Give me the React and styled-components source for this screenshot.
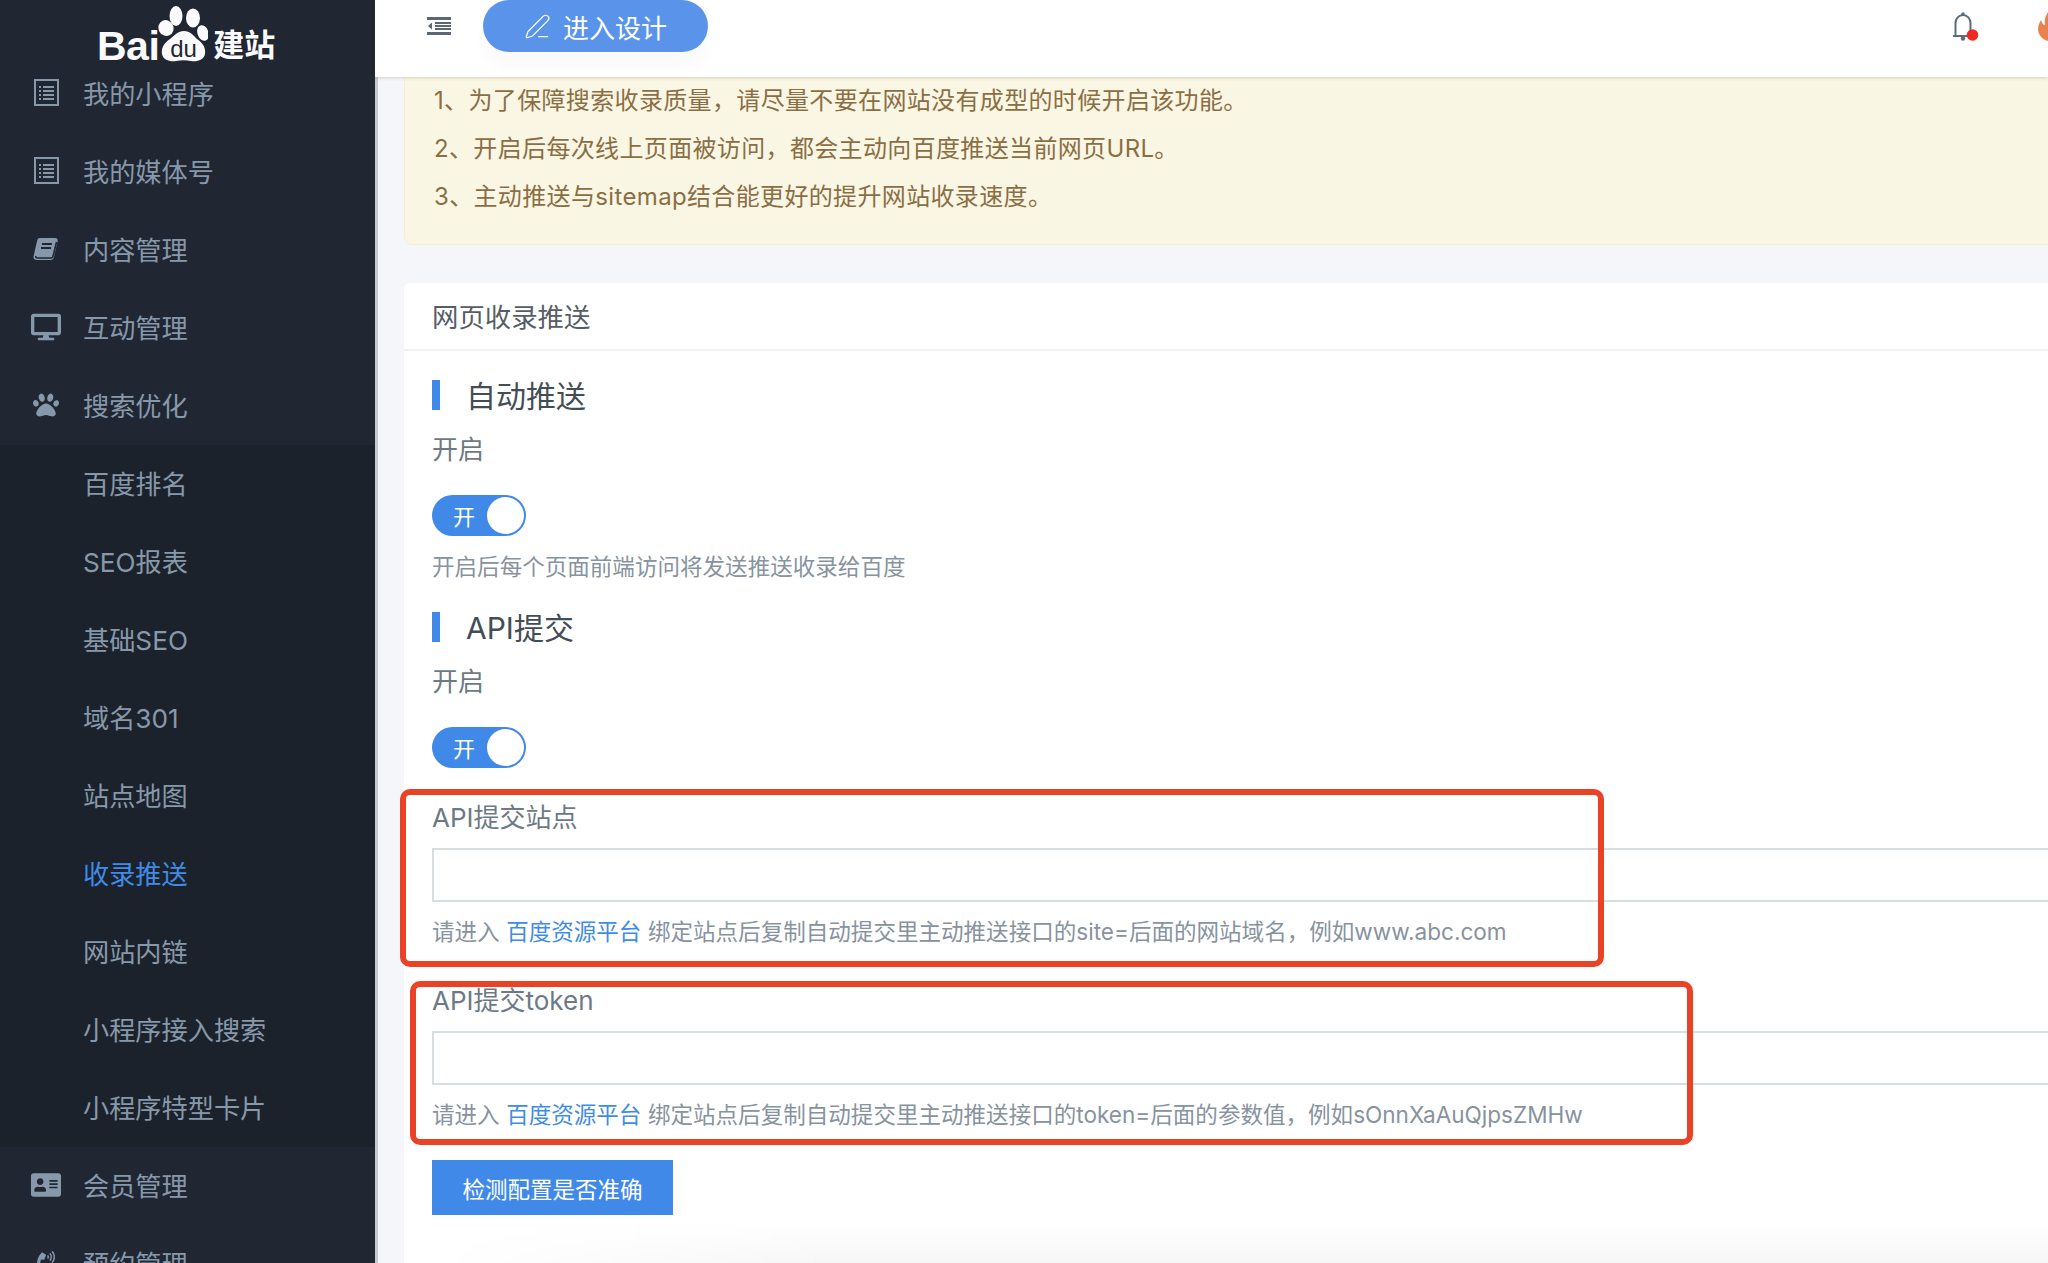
import React from "react";
import styled, { createGlobalStyle } from "styled-components";
import { FaDesktop, FaPaw, FaAddressCard, FaPhoneVolume } from "react-icons/fa";
import { PenLine } from "lucide-react";

const Global = createGlobalStyle`
  html, body { margin: 0; padding: 0; height: 100%; overflow: hidden; background: #f4f6fa; }
  body { font-family: Inter, "Noto Sans CJK SC", "Noto Sans", sans-serif; }
  * { box-sizing: border-box; }
`;

const Page = styled.div`
  display: flex;
  width: 2048px;
  height: 1263px;
  overflow: hidden;
`;

const Sidebar = styled.aside`
  flex: 0 0 375px;
  background: #202733;
  overflow: hidden;
`;

const Logo = styled.div`
  height: 55px;
  display: flex;
  align-items: flex-start;
  padding-left: 97px;
  color: #fbfafc;
  white-space: nowrap;
`;

const LogoWord = styled.span`
  font-family: "Liberation Sans", sans-serif;
  font-weight: 700;
  font-size: 41px;
  line-height: 46px;
  margin-top: 23px;
  letter-spacing: -0.5px;
`;

const LogoCn = styled.span`
  font-family: "Noto Sans CJK SC", sans-serif;
  font-weight: 700;
  font-size: 31px;
  line-height: 46px;
  margin-top: 20px;
  margin-left: 5px;
`;

const Paw = styled.svg`
  width: 50px;
  height: 60px;
  margin-top: 3px;
  margin-left: -1px;
  flex: none;
  position: relative;
`;

const MenuRow = styled.div`
  height: 78px;
  display: flex;
  align-items: center;
  padding-left: ${(p) => (p.$sub ? "83px" : "30px")};
  padding-bottom: 3px;
  gap: 21px;
  font-size: 26.2px;
  color: ${(p) => (p.$active ? "#3f8ce8" : "#8798aa")};
`;

const MenuIcon = styled.span`
  flex: 0 0 32px;
  display: flex;
  justify-content: center;
  align-items: center;
  color: #8798aa;
`;

const SubMenu = styled.div`
  background: #1c222b;
`;

const Main = styled.main`
  flex: 1;
  min-width: 0;
  position: relative;
  display: flex;
  flex-direction: column;
  overflow: hidden;
  &::after {
    content: "";
    position: absolute;
    left: 60px;
    right: 0;
    bottom: 0;
    height: 40px;
    background: linear-gradient(to bottom, rgba(0, 0, 0, 0), rgba(0, 0, 0, 0.035));
    -webkit-mask-image: linear-gradient(to right, transparent, #000 25%);
    mask-image: linear-gradient(to right, transparent, #000 25%);
    pointer-events: none;
  }
`;

const Header = styled.header`
  flex: 0 0 77px;
  height: 77px;
  background: #fff;
  position: relative;
  z-index: 2;
  display: flex;
  align-items: center;
  padding: 0 0 25px 52px;
  box-shadow: 0 1px 3px rgba(90, 80, 40, 0.22);
`;

const DesignButton = styled.div`
  height: 52px;
  width: 225px;
  margin-left: 32px;
  border-radius: 26px;
  background: #5a94ea;
  color: #fff;
  font-size: 26px;
  display: flex;
  align-items: center;
  justify-content: center;
  gap: 12px;
  box-shadow: 0 16px 14px rgba(0, 0, 0, 0.025);
`;

const HeaderRight = styled.div`
  margin-left: auto;
  margin-right: -20px;
  display: flex;
  align-items: center;
  gap: 59px;
`;

const Content = styled.div`
  flex: 1;
  border-left: 3px solid #c6cad1;
  padding-left: 26px;
  margin-right: -30px;
  margin-top: -1px;
`;

const Notice = styled.div`
  background: #faf6e4;
  border: 1px solid #f5eed3;
  border-radius: 0 0 0 8px;
  color: #8a6f45;
  font-size: 24px;
  letter-spacing: 0.35px;
  line-height: 48px;
  padding: 0 0 23px 29px;
`;

const Card = styled.section`
  margin-top: 38px;
  background: #fff;
  border-radius: 6px 0 0 0;
  padding-bottom: 60px;
`;

const CardTitle = styled.div`
  height: 68px;
  border-bottom: 2px solid #f1f2f5;
  padding: 0 28px 1px;
  display: flex;
  align-items: center;
  font-size: 26.4px;
  color: #555e66;
`;

const CardBody = styled.div`
  padding: 0 0 0 28px;
  margin-top: -1px;
`;

const SectionTitle = styled.h3`
  margin: 30px 0 0;
  height: 30px;
  border-left: 8px solid #4189e8;
  padding: 0 0 2px 26px;
  display: flex;
  align-items: center;
  font-size: 30px;
  font-weight: 400;
  color: #434d56;
`;

const Label = styled.div`
  margin-top: ${(p) => p.$top}px;
  height: 30px;
  line-height: 30px;
  font-size: 26px;
  color: #6d7a86;
`;

const Toggle = styled.div`
  margin-top: 30px;
  width: 94px;
  height: 41px;
  border-radius: 21px;
  background: #4189e8;
  position: relative;
  color: #fff;
  font-size: 22px;
  line-height: 44px;
  padding-left: 21px;
  &::after {
    content: "";
    position: absolute;
    right: 2px;
    top: 2px;
    width: 37px;
    height: 37px;
    border-radius: 50%;
    background: #fff;
  }
`;

const Help = styled.div`
  margin-top: ${(p) => p.$top}px;
  height: 30px;
  line-height: 30px;
  font-size: 22.55px;
  color: #87939f;
  white-space: nowrap;
`;

const HelpLink = styled.span`
  color: #3f8ce8;
  margin: 0 6.5px;
`;

const Field = styled.div`
  position: relative;
  margin-top: ${(p) => p.$top}px;
`;

const FieldLabel = styled(Label)`
  margin-top: 0;
`;

const Input = styled.div`
  margin-top: 15px;
  height: 54px;
  border: 2px solid #d6dee2;
  background: #fff;
`;

const RedBox = styled.div`
  position: absolute;
  left: ${(p) => p.$left}px;
  top: ${(p) => p.$topOffset}px;
  width: ${(p) => p.$w}px;
  height: ${(p) => p.$h}px;
  border: 6px solid #ea4227;
  border-radius: 10px;
  pointer-events: none;
`;

const Submit = styled.div`
  margin-top: 30px;
  width: 241px;
  height: 55px;
  background: #4189e8;
  color: #fff;
  font-size: 22.5px;
  display: flex;
  align-items: center;
  justify-content: center;
`;

const ListIcon = () => (
  <svg width="25" height="27" viewBox="0 0 25 27">
    <rect x="1" y="1" width="23" height="25" fill="none" stroke="#8798aa" strokeWidth="2" />
    <g fill="#8798aa">
      <rect x="5" y="7" width="2" height="2" /><rect x="9" y="7" width="11" height="2" />
      <rect x="5" y="11" width="2" height="2" /><rect x="9" y="11" width="11" height="2" />
      <rect x="5" y="15" width="2" height="2" /><rect x="9" y="15" width="11" height="2" />
      <rect x="5" y="19" width="2" height="2" /><rect x="9" y="19" width="11" height="2" />
    </g>
  </svg>
);

const BookIcon = () => (
  <svg width="26" height="24" viewBox="0 0 26 24">
    <path fill="#8798aa" d="M7 1h15c2 0 3 1 2.6 3L21 20c-.4 2-1.600 3-3.600 3H4c-2.500 0-4-1.500-3.400-4L4.200 3.500C4.600 1.800 5.500 1 7 1z" />
    <path fill="none" stroke="#202733" strokeWidth="1.600" d="M23.500 5 20 19.500c-.3 1-1 1.500-2 1.500H4.500c-1.500 0-2-1-1.500-2" />
    <path fill="none" stroke="#202733" strokeWidth="1.800" d="M9 7h10M8 11h10" />
  </svg>
);

const OutdentIcon = () => (
  <svg width="24" height="18" viewBox="0 0 24 18" fill="#5b6772">
    <rect width="24" height="3" />
    <rect y="15" width="24" height="3" />
    <rect x="8" y="5" width="16" height="2" />
    <rect x="8" y="8" width="16" height="2" />
    <rect x="8" y="11" width="16" height="2" />
    <path d="M5 5.500v7L1 9z" />
  </svg>
);

const BellIcon = () => (
  <svg width="27" height="30" viewBox="0 0 27 30">
    <path fill="none" stroke="#5f6d7a" strokeWidth="2" d="M1 25h20M3.500 25V12a7.500 8 0 0 1 15 0v13" />
    <circle cx="11" cy="3" r="1.800" fill="#5f6d7a" />
    <circle cx="11" cy="27.500" r="2.200" fill="#5f6d7a" />
    <circle cx="20.500" cy="24" r="5.800" fill="#ee2a1f" />
  </svg>
);

const FlameIcon = () => (
  <svg width="30" height="32" viewBox="0 0 30 32">
    <path fill="#e8824f" d="M12 0c2 5 10 8 14 15 3 7-2 16-12 17C6 31 0 26 0 19c0-4 2-7 3-9 1 3 2 5 4 5C6 9 8 4 12 0z" />
  </svg>
);

const items = [
  { text: "我的小程序", icon: <ListIcon /> },
  { text: "我的媒体号", icon: <ListIcon /> },
  { text: "内容管理", icon: <BookIcon /> },
  { text: "互动管理", icon: <FaDesktop size={30} /> },
  { text: "搜索优化", icon: <FaPaw size={26} /> },
];

const subs = ["百度排名", "SEO报表", "基础SEO", "域名301", "站点地图", "收录推送", "网站内链", "小程序接入搜索", "小程序特型卡片"];

export default function App() {
  return (
    <Page>
      <Global />
      <Sidebar>
        <Logo>
          <LogoWord>Bai</LogoWord>
          <Paw viewBox="0 0 50 60">
            <g fill="#fbfafc">
              <ellipse cx="18" cy="13" rx="6.500" ry="10" />
              <ellipse cx="35" cy="15" rx="7" ry="9.500" />
              <ellipse cx="8" cy="25" rx="7.500" ry="8" transform="rotate(-25 8 25)" />
              <ellipse cx="45" cy="30" rx="5.500" ry="8" transform="rotate(-20 45 30)" />
              <path d="M26 28c6 0 9 4 13 8 6 4 9 9 8 15-1 6-8 8-14 7-5-1-10-1-15 0-6 1-13-1-14-7-1-6 2-11 8-15 5-4 8-8 14-8z" />
            </g>
            <text x="25.500" y="54" textAnchor="middle" fontFamily="Liberation Sans, sans-serif" fontSize="24" fill="#202733">du</text>
          </Paw>
          <LogoCn>建站</LogoCn>
        </Logo>
        {items.map((it) => (
          <MenuRow key={it.text}>
            <MenuIcon>{it.icon}</MenuIcon>
            {it.text}
          </MenuRow>
        ))}
        <SubMenu>
          {subs.map((s) => (
            <MenuRow key={s} $sub $active={s === "收录推送"}>{s}</MenuRow>
          ))}
        </SubMenu>
        <MenuRow><MenuIcon><FaAddressCard size={30} /></MenuIcon>会员管理</MenuRow>
        <MenuRow><MenuIcon><FaPhoneVolume size={24} /></MenuIcon>预约管理</MenuRow>
      </Sidebar>
      <Main>
        <Header>
          <OutdentIcon />
          <DesignButton>
            <PenLine size={27} strokeWidth={1.1} />
            进入设计
          </DesignButton>
          <HeaderRight>
            <BellIcon />
            <FlameIcon />
          </HeaderRight>
        </Header>
        <Content>
          <Notice>
            <div>1、为了保障搜索收录质量，请尽量不要在网站没有成型的时候开启该功能。</div>
            <div>2、开启后每次线上页面被访问，都会主动向百度推送当前网页URL。</div>
            <div>3、主动推送与sitemap结合能更好的提升网站收录速度。</div>
          </Notice>
          <Card>
            <CardTitle>网页收录推送</CardTitle>
            <CardBody>
              <SectionTitle>自动推送</SectionTitle>
              <Label $top={25}>开启</Label>
              <Toggle>开</Toggle>
              <Help $top={16}>开启后每个页面前端访问将发送推送收录给百度</Help>
              <SectionTitle>API提交</SectionTitle>
              <Label $top={25}>开启</Label>
              <Toggle>开</Toggle>
              <Field $top={35}>
                <FieldLabel>API提交站点</FieldLabel>
                <Input />
                <Help $top={15}>请进入<HelpLink>百度资源平台</HelpLink>绑定站点后复制自动提交里主动推送接口的site=后面的网站域名，例如www.abc.com</Help>
                <RedBox $left={-32} $topOffset={-14} $w={1204} $h={178} />
              </Field>
              <Field $top={39}>
                <FieldLabel>API提交token</FieldLabel>
                <Input />
                <Help $top={15}>请进入<HelpLink>百度资源平台</HelpLink>绑定站点后复制自动提交里主动推送接口的token=后面的参数值，例如sOnnXaAuQjpsZMHw</Help>
                <RedBox $left={-22} $topOffset={-5} $w={1283} $h={164} />
              </Field>
              <Submit>检测配置是否准确</Submit>
            </CardBody>
          </Card>
        </Content>
      </Main>
    </Page>
  );
}
